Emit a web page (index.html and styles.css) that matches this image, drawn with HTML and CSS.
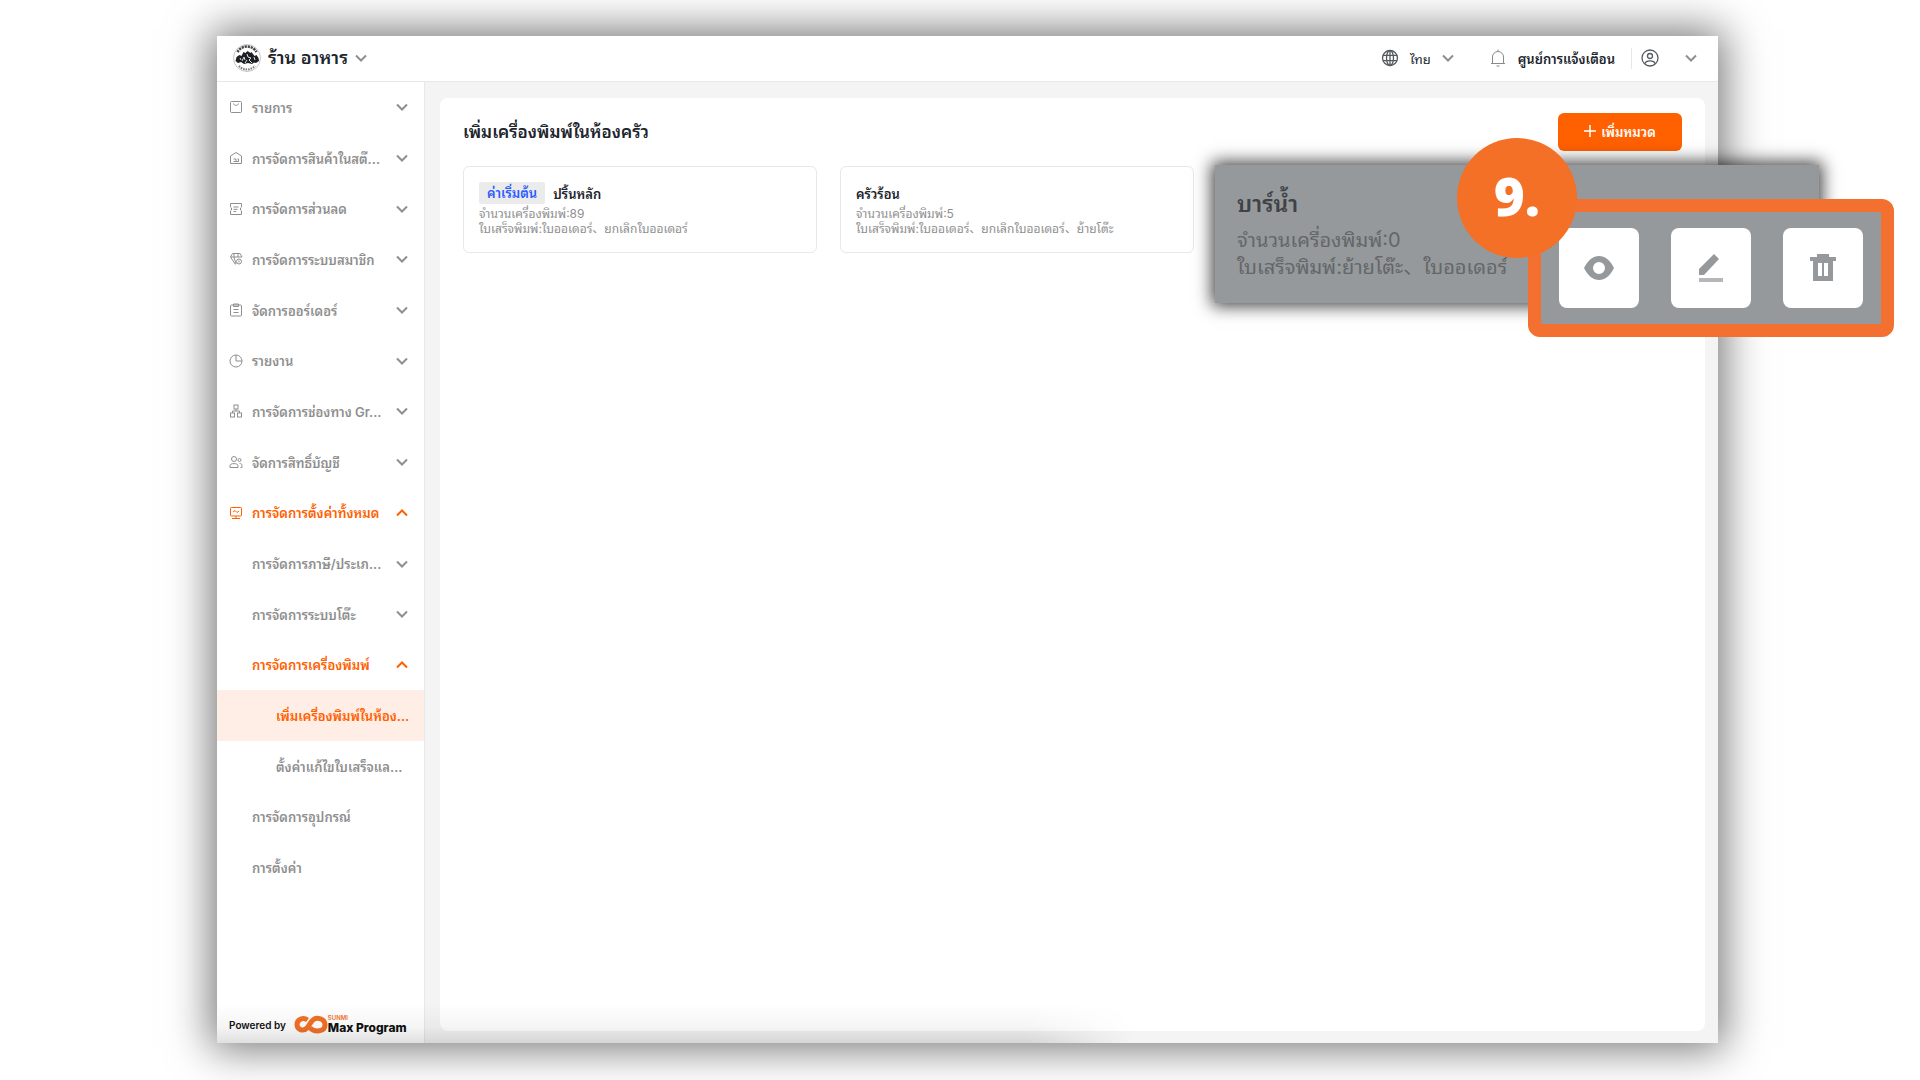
FILE: index.html
```html
<!DOCTYPE html>
<html lang="th">
<head>
  <meta charset="UTF-8" />
  <meta name="viewport" content="width=device-width, initial-scale=1.0"/>
  <title>เพิ่มเครื่องพิมพ์ในห้องครัว</title>
  <link rel="stylesheet" href="styles.css">
</head>
<body>
  <!-- Shared icon shapes -->
  <svg class="sprite" aria-hidden="true">
    <symbol id="chevron" viewBox="0 0 12 8"><path d="M1 1.500 6 6.500l5-5" /></symbol>
  </svg>

  <div class="window">
    <header class="topbar">
      <button class="shop">
        <svg class="shop-logo" viewBox="0 0 28 28">
          <circle cx="14" cy="14" r="13.500" fill="#fff" stroke="#c4c4c4" />
          <path d="M4.500 8a11 11 0 0 1 19 0" fill="none" stroke="#444" stroke-width="2.500" stroke-dasharray="2.200 .8" />
          <path d="M6 22a11 11 0 0 0 16 0" fill="none" stroke="#777" stroke-width="2" stroke-dasharray="1.500 1" />
          <path d="M2.500 17l1-4 3-2 2 1 2-4 2 1 2-2 3 2 1-1 3 4 2-1 2 3 .5 3-3 2-2-.5-2 1.500-4-1-4 1-3-2-3 1z" fill="#1c1f24" />
          <path d="M9 17l2-4 1 3M14 10l1 3 3 1-2 2 3 3M7 14l1 2M21 13l1 3M12 19l2-3" fill="none" stroke="#ddd" stroke-width="1" />
        </svg>
        <span class="shop-name">ร้าน อาหาร</span>
        <svg class="chevron"><use href="#chevron" /></svg>
      </button>
      <div class="tools">
        <button class="tool language">
          <svg class="tool-icon dark" viewBox="0 0 18 18"><circle cx="9" cy="9" r="7.500" /><ellipse cx="9" cy="9" rx="3.500" ry="7.500" /><path d="M9 1.500v15M2 6.300h14M2 11.700h14" /></svg>
          <span>ไทย</span>
          <svg class="chevron"><use href="#chevron" /></svg>
        </button>
        <button class="tool alerts">
          <svg class="tool-icon" viewBox="0 0 18 18"><path d="M2 14.500h14M3.500 14.500V8a5.500 5.500 0 0 1 11 0v6.500M9 2.500V.5M7.500 17h3" /></svg>
          <span>ศูนย์การแจ้งเตือน</span>
        </button>
        <button class="tool account" aria-label="บัญชี">
          <svg class="tool-icon dark" viewBox="0 0 18 18"><circle cx="9" cy="9" r="8" /><circle cx="9" cy="7" r="2.500" /><path d="M3.800 14.800c1-4 9.400-4 10.400 0" /></svg>
          <svg class="chevron"><use href="#chevron" /></svg>
        </button>
      </div>
    </header>

    <div class="body">
      <aside class="sidebar">
        <nav class="menu">
          <a href="#" class="item">
            <svg class="icon" viewBox="0 0 14 14"><rect x="1.500" y="1.500" width="11" height="11" rx="1" /><path d="M4.500 3.500c.5 2.500 4.500 2.500 5 0" /></svg>
            <span class="label">รายการ</span><svg class="chevron"><use href="#chevron" /></svg>
          </a>
          <a href="#" class="item">
            <svg class="icon" viewBox="0 0 14 14"><path d="M1.500 12.500V5L7 1.500 12.500 5v7.500zM4.500 8h2.500M4.500 10.500h5V8H8.500M7 8v2.500" /></svg>
            <span class="label">การจัดการสินค้าในสต๊...</span><svg class="chevron"><use href="#chevron" /></svg>
          </a>
          <a href="#" class="item">
            <svg class="icon" viewBox="0 0 14 14"><path d="M1.500 1.500h11V5c-1.500.5-1.500 3.500 0 4v3.500h-11V9C3 8.500 3 5.500 1.500 5zM4.500 5h5M4.500 7.300h4M4.500 9.500h2.500" /></svg>
            <span class="label">การจัดการส่วนลด</span><svg class="chevron"><use href="#chevron" /></svg>
          </a>
          <a href="#" class="item">
            <svg class="icon" viewBox="0 0 14 14"><path d="M6.500 12.500 1.500 5 3.500 1.500h7.500L13 5M1.500 5H13M5 1.500V5l2 7M9 1.500V5" /><circle cx="10" cy="9.500" r="2.500" /><path d="M10 8.500v2" /></svg>
            <span class="label">การจัดการระบบสมาชิก</span><svg class="chevron"><use href="#chevron" /></svg>
          </a>
          <a href="#" class="item">
            <svg class="icon" viewBox="0 0 14 14"><rect x="1.500" y="2" width="11" height="11" rx="1" /><path d="M4.500 1h5v2.500h-5zM4.500 6.500h5M4.500 9.500h5" /></svg>
            <span class="label">จัดการออร์เดอร์</span><svg class="chevron"><use href="#chevron" /></svg>
          </a>
          <a href="#" class="item">
            <svg class="icon" viewBox="0 0 14 14"><circle cx="7" cy="7" r="6" /><path d="M7 1v6h6" /></svg>
            <span class="label">รายงาน</span><svg class="chevron"><use href="#chevron" /></svg>
          </a>
          <a href="#" class="item">
            <svg class="icon" viewBox="0 0 14 14"><rect x="5" y="1" width="4" height="4" /><rect x="1.500" y="9" width="4" height="4" /><rect x="8.500" y="9" width="4" height="4" /><path d="M7 5v2M3.500 9V7h7v2" /></svg>
            <span class="label">การจัดการช่องทาง Gr...</span><svg class="chevron"><use href="#chevron" /></svg>
          </a>
          <a href="#" class="item">
            <svg class="icon" viewBox="0 0 14 14"><circle cx="5" cy="4" r="2.500" /><path d="M1 12.500v-2c0-2.500 8-2.500 8 0v2z" /><circle cx="10.500" cy="5" r="1.500" /><path d="M10.500 8.500c2 0 2.500 1 2.500 2v2h-1.500" /></svg>
            <span class="label">จัดการสิทธิ์บัญชี</span><svg class="chevron"><use href="#chevron" /></svg>
          </a>
          <a href="#" class="item open">
            <svg class="icon" viewBox="0 0 14 14"><rect x="1.500" y="1.500" width="11" height="8.500" rx="1" /><path d="M4 6l2-1.500 2 2 2-1.500M7 10v2.500M3 12.500h8" /></svg>
            <span class="label">การจัดการตั้งค่าทั้งหมด</span><svg class="chevron"><use href="#chevron" /></svg>
          </a>
          <a href="#" class="item sub"><span class="label">การจัดการภาษี/ประเภ...</span><svg class="chevron"><use href="#chevron" /></svg></a>
          <a href="#" class="item sub"><span class="label">การจัดการระบบโต๊ะ</span><svg class="chevron"><use href="#chevron" /></svg></a>
          <a href="#" class="item sub open"><span class="label">การจัดการเครื่องพิมพ์</span><svg class="chevron"><use href="#chevron" /></svg></a>
          <a href="#" class="item leaf active"><span class="label">เพิ่มเครื่องพิมพ์ในห้อง...</span></a>
          <a href="#" class="item leaf"><span class="label">ตั้งค่าแก้ไขใบเสร็จแล...</span></a>
          <a href="#" class="item sub"><span class="label">การจัดการอุปกรณ์</span></a>
          <a href="#" class="item sub"><span class="label">การตั้งค่า</span></a>
        </nav>
        <footer class="powered">
          <span class="powered-by">Powered by</span>
          <svg class="brand-mark" viewBox="0 0 34 20"><path d="M13.500 5C9.500 2 3 4 3 9.500s6.500 7.500 10.500 3l4-6C21.500 1 31 3 31 10S20.500 17.500 16 13" fill="none" stroke="#f47026" stroke-width="5" /></svg>
          <span class="brand"><span class="brand-top">SUNMI</span><span class="brand-name">Max Program</span></span>
        </footer>
      </aside>

      <main class="content">
        <section class="panel">
          <div class="panel-head">
            <h1>เพิ่มเครื่องพิมพ์ในห้องครัว</h1>
            <button class="add"><svg viewBox="0 0 12 12"><path d="M6 0v12M0 6h12" /></svg>เพิ่มหมวด</button>
          </div>

          <div class="cards">
            <article class="card">
              <h2><span class="tag">ค่าเริ่มต้น</span>ปริ้นหลัก</h2>
              <p>จำนวนเครื่องพิมพ์:89</p>
              <p>ใบเสร็จพิมพ์:ใบออเดอร์、ยกเลิกใบออเดอร์</p>
            </article>
            <article class="card">
              <h2>ครัวร้อน</h2>
              <p>จำนวนเครื่องพิมพ์:5</p>
              <p>ใบเสร็จพิมพ์:ใบออเดอร์、ยกเลิกใบออเดอร์、ย้ายโต๊ะ</p>
            </article>
            <div class="slot">
              <article class="card-zoom">
                <h2>บาร์น้ำ</h2>
                <p>จำนวนเครื่องพิมพ์:0</p>
                <p>ใบเสร็จพิมพ์:ย้ายโต๊ะ、ใบออเดอร์</p>
                <div class="actions">
                  <button aria-label="ดู"><svg viewBox="0 0 32 32"><path fill-rule="evenodd" d="M1 16C5 8 10 4 16 4s11 4 15 12c-4 8-9 12-15 12S5 24 1 16zm15-6a6 6 0 1 0 0 12 6 6 0 0 0 0-12z" /></svg></button>
                  <button aria-label="แก้ไข"><svg viewBox="0 0 32 32"><path d="M4 17 19 2l5 5L9 23H4z" /><path d="M4 26h24v4H4z" opacity="0.7" /></svg></button>
                  <button aria-label="ลบ"><svg viewBox="0 0 32 32"><path fill-rule="evenodd" d="M3 5h7V2h12v3h7v4h-3v20H6V9H3zm8 6v13h4V11zm6 0v13h4V11z" /></svg></button>
                </div>
                <span class="step">9.</span>
              </article>
            </div>
          </div>
        </section>
      </main>
    </div>
  </div>
</body>
</html>
```
FILE: styles.css
```css
* {
  margin: 0;
  padding: 0;
  box-sizing: border-box;
}

body {
  font-family: Inter, "Noto Sans Thai Looped", "Noto Sans Thai", "Noto Sans CJK SC", sans-serif;
  font-size: 13px;
  background: #fff;
  color: #20242b;
  min-height: 100vh;
  padding: 36px 202px 37px 217px;
  display: flex;
}

button {
  font: inherit;
  color: inherit;
  background: none;
  border: 0;
}

a {
  color: inherit;
  text-decoration: none;
}

.sprite {
  position: absolute;
  width: 0;
  height: 0;
}

.window {
  position: relative;
  flex: 1;
  display: flex;
  flex-direction: column;
  background: #fff;
  box-shadow: 0 0 40px 6px rgba(0, 0, 0, 0.54);
}

/* soft fade along the bottom edge */
.window::after {
  content: "";
  position: absolute;
  left: 0;
  right: 0;
  bottom: 0;
  height: 40px;
  background: linear-gradient(to top, rgba(0, 0, 0, 0.12), rgba(0, 0, 0, 0.04) 40%, transparent);
  -webkit-mask-image: linear-gradient(to right, #000 54%, transparent 61%);
  mask-image: linear-gradient(to right, #000 54%, transparent 61%);
  pointer-events: none;
}

.chevron {
  width: 12px;
  height: 8px;
  flex: none;
  fill: none;
  stroke: #8f8f8f;
  stroke-width: 2;
}

/* Top bar */
.topbar {
  height: 46px;
  display: flex;
  align-items: center;
  justify-content: space-between;
  padding: 0 21px 1px 16px;
  border-bottom: 1px solid #e8e8e8;
}

.shop {
  display: flex;
  align-items: center;
  gap: 7px;
}

.shop-logo {
  width: 28px;
  height: 28px;
}

.shop-name {
  font-size: 18px;
  font-weight: 600;
  line-height: 28px;
}

.tools,
.tool {
  display: flex;
  align-items: center;
}

.tool {
  gap: 11px;
}

.tool-icon {
  width: 18px;
  height: 18px;
  fill: none;
  stroke: #8a8a8a;
}

.tool-icon.dark {
  stroke: #55595e;
  stroke-width: 1.3;
}

.alerts {
  margin-left: 35px;
  padding-right: 16px;
  border-right: 1px solid #e8e8e8;
  font-weight: 600;
}

.account {
  margin-left: 9px;
  gap: 26px;
}

.body {
  flex: 1;
  display: flex;
}

/* Sidebar */
.sidebar {
  width: 208px;
  display: flex;
  flex-direction: column;
  border-right: 1px solid #e8e8e8;
}

.menu {
  flex: 1;
  display: flex;
  flex-direction: column;
}

.item {
  flex: 1;
  display: flex;
  align-items: center;
  padding: 0 16px 0 12px;
  color: #8f8f8f;
  font-weight: 600;
  white-space: nowrap;
}

.label {
  flex: 1;
}

.icon {
  width: 14px;
  height: 14px;
  margin-right: 9px;
  fill: none;
  stroke: currentColor;
}

.sub {
  padding-left: 35px;
}

.leaf {
  padding-left: 59px;
}

.open,
.active {
  color: #ff6000;
}

.open .chevron {
  stroke: #ff6000;
  transform: rotate(180deg);
}

.active {
  background: #ffeee5;
}

.powered {
  height: 150px;
  padding: 0 11px 8px 12px;
  display: flex;
  align-items: flex-end;
  color: #111;
}

.powered-by {
  font-size: 10px;
  font-weight: 600;
  line-height: 20px;
}

.brand-mark {
  width: 34px;
  height: 20px;
  margin-left: 8px;
}

.brand {
  display: flex;
  flex-direction: column;
}

.brand-top {
  font-size: 6px;
  line-height: 6px;
  font-weight: 600;
  color: #f47026;
}

.brand-name {
  font-size: 12px;
  line-height: 14px;
  font-weight: 800;
}

/* Content */
.content {
  flex: 1;
  display: flex;
  padding: 16px 13px 12px 15px;
  background: #f4f4f4;
}

.panel {
  flex: 1;
  padding: 15px 23px;
  background: #fff;
  border-radius: 8px;
}

.panel-head {
  display: flex;
  align-items: center;
  justify-content: space-between;
  margin-bottom: 15px;
}

h1 {
  padding-bottom: 4px;
  font-size: 17px;
  font-weight: 600;
}

.add {
  display: flex;
  align-items: center;
  justify-content: center;
  gap: 5px;
  width: 124px;
  height: 38px;
  padding-bottom: 2px;
  border-radius: 6px;
  background: #ff6000;
  color: #fff;
  font-weight: 600;
}

.add svg {
  width: 12px;
  height: 12px;
  stroke: #fff;
  stroke-width: 1.5;
}

.cards {
  display: grid;
  grid-template-columns: repeat(auto-fill, 354px);
  gap: 23px;
}

.card {
  height: 87px;
  padding: 15px;
  border: 1px solid #e8e8e8;
  border-radius: 6px;
}

.card h2 {
  display: flex;
  align-items: center;
  gap: 8px;
  height: 22px;
  margin-bottom: 2px;
  font-size: 13px;
  font-weight: 600;
}

.tag {
  padding: 0 8px;
  line-height: 22px;
  border-radius: 2px;
  background: #ebebeb;
  color: #2b5cff;
}

.card p {
  font-size: 12px;
  line-height: 15px;
  color: #8f8f8f;
}

.slot {
  position: relative;
}

/* Enlarged third card with its hover actions */
.card-zoom {
  position: absolute;
  top: -1px;
  left: -2px;
  width: 604px;
  height: 138px;
  padding: 20px 22px;
  background: #95999b;
  box-shadow: 0 0 16px 3px rgba(0, 0, 0, 0.75);
}

.card-zoom h2 {
  margin-bottom: 4px;
  font-size: 23px;
  line-height: 38px;
  font-weight: 600;
  color: #3f4246;
}

.card-zoom p {
  font-size: 20px;
  line-height: 27px;
  color: #63676a;
}

.actions {
  position: absolute;
  top: 34px;
  left: 313px;
  display: flex;
  gap: 32px;
  padding: 16px 18px;
  border: 13px solid #f47031;
  border-radius: 12px;
  background: #95999b;
}

.actions button {
  display: flex;
  align-items: center;
  justify-content: center;
  width: 80px;
  height: 80px;
  border-radius: 8px;
  background: #fff;
}

.actions svg {
  width: 32px;
  height: 32px;
  fill: #95999b;
}

.step {
  position: absolute;
  top: -27px;
  left: 242px;
  width: 120px;
  height: 120px;
  border-radius: 50%;
  background: #f47026;
  color: #fff;
  font-family: "Open Sans", sans-serif;
  font-size: 53px;
  font-weight: 800;
  line-height: 116px;
  text-align: center;
}
```
